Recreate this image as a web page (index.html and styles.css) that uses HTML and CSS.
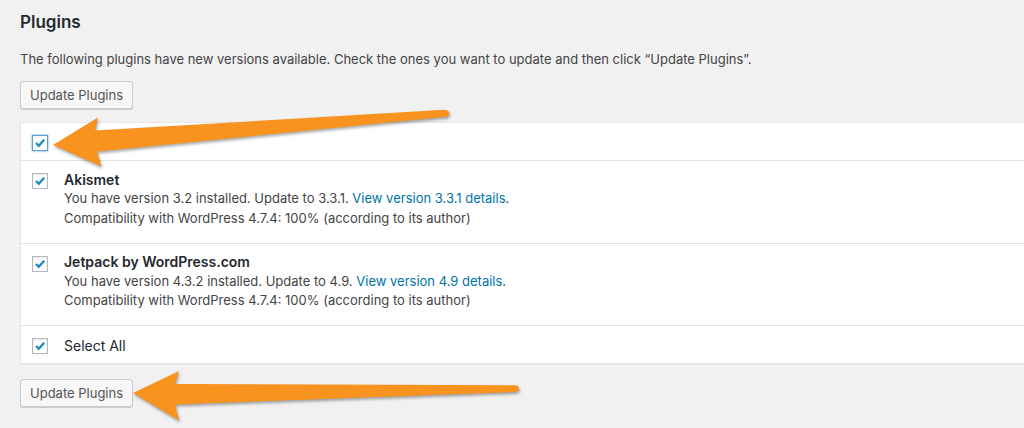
FILE: index.html
```html
<!DOCTYPE html>
<html lang="en">
<head>
<meta charset="utf-8">
<title>Plugins</title>
<link rel="stylesheet" href="styles.css">
</head>
<body>
<div class="wrap">
  <h2 class="title">Plugins</h2>
  <p class="intro">The following plugins have new versions available. Check the ones you want to update and then click “Update Plugins”.</p>
  <div class="actions"><button class="button" type="button">Update Plugins</button></div>

  <div class="plugins-table">
    <div class="row head">
      <span class="check-col"><span class="cb focus"><svg viewBox="0 0 16 16"><path d="M3.4 8 L6.6 11.1 L12.8 4.2"/></svg></span></span>
    </div>
    <div class="row plugin">
      <span class="check-col"><span class="cb"><svg viewBox="0 0 16 16"><path d="M3.4 8 L6.6 11.1 L12.8 4.2"/></svg></span></span>
      <div class="plugin-title">
        <strong>Akismet</strong>
        <span class="line">You have version 3.2 installed. Update to 3.3.1. <a href="#">View version 3.3.1 details</a>.</span>
        <span class="line">Compatibility with WordPress 4.7.4: 100% (according to its author)</span>
      </div>
    </div>
    <div class="row plugin">
      <span class="check-col"><span class="cb"><svg viewBox="0 0 16 16"><path d="M3.4 8 L6.6 11.1 L12.8 4.2"/></svg></span></span>
      <div class="plugin-title">
        <strong>Jetpack by WordPress.com</strong>
        <span class="line">You have version 4.3.2 installed. Update to 4.9. <a href="#">View version 4.9 details</a>.</span>
        <span class="line">Compatibility with WordPress 4.7.4: 100% (according to its author)</span>
      </div>
    </div>
    <div class="row foot">
      <span class="check-col"><span class="cb"><svg viewBox="0 0 16 16"><path d="M3.4 8 L6.6 11.1 L12.8 4.2"/></svg></span></span>
      <label class="select-all">Select All</label>
    </div>
  </div>

  <div class="actions bottom"><button class="button" type="button">Update Plugins</button></div>
</div>

<svg class="arrows" viewBox="0 0 1024 428" aria-hidden="true">
  <path class="arrow" d="M53 145 L98 117.5 L95 130.5 L445 109.8 Q449.5 110.5 449.2 113.4 Q448.8 116.4 445.5 116.8 L97 151.5 L101.5 166.5 Z"/>
  <path class="arrow" d="M133 393 L179 371 L175 384 L515 385.2 Q519 385.6 519 388.6 Q519 391.6 515 392 L175 404.5 L179 420.5 Z"/>
</svg>
</body>
</html>
```

FILE: styles.css
```css
* { box-sizing: border-box; }

html, body {
  margin: 0;
  padding: 0;
}

body {
  position: relative;
  width: 1024px;
  height: 428px;
  overflow: hidden;
  background: #f1f1f1;
  color: #444;
  font-family: Inter, Roboto, "Liberation Sans", Arial, sans-serif;
  font-size: 13px;
  line-height: 1.5;
}

.wrap {
  padding: 11px 0 0 20px;
}

.title {
  margin: 0;
  font-size: 17px;
  line-height: 22px;
  font-weight: 600;
  color: #23282d;
}

.intro {
  margin: 16px 0 12px;
  line-height: 20px;
}

.actions {
  display: flex;
}

.actions.bottom {
  margin-top: 15px;
}

.button {
  height: 28px;
  margin: 0;
  padding: 0 9px 1px;
  font-family: inherit;
  font-size: 13px;
  line-height: 26px;
  color: #555;
  background: #f7f7f7;
  border: 1px solid #ccc;
  border-radius: 3px;
  box-shadow: 0 1px 0 #ccc;
  cursor: pointer;
}

.plugins-table {
  margin-top: 13px;
  background: #fff;
  border: 1px solid #e5e5e5;
  border-right: 0;
  box-shadow: 0 1px 1px rgba(0, 0, 0, .04);
}

.row {
  display: flex;
  align-items: flex-start;
  border-bottom: 1px solid #e1e1e1;
}

.row:last-child {
  border-bottom: 0;
}

.row.head {
  height: 38px;
}

.row.plugin {
  height: 82.5px;
}

.row.foot {
  height: 37px;
}

.check-col {
  flex: 0 0 43px;
  padding: 12px 0 0 11px;
}

.cb {
  display: block;
  width: 16px;
  height: 16px;
  background: #fff;
  border: 1px solid #b4b9be;
  box-shadow: inset 0 1px 2px rgba(0, 0, 0, .1);
}

.cb.focus {
  border-color: #5b9dd9;
  box-shadow: 0 0 2px rgba(30, 140, 190, .8);
}

.cb svg {
  display: block;
  width: 14px;
  height: 14px;
}

.cb path {
  fill: none;
  stroke: #1e8cbe;
  stroke-width: 2.7;
  stroke-linecap: butt;
  stroke-linejoin: miter;
}

.plugin-title {
  display: flex;
  flex-direction: column;
  padding-top: 8.5px;
  line-height: 19.5px;
}

.plugin-title strong {
  font-size: 14px;
  font-weight: 600;
  color: #23282d;
}

.plugin-title a {
  color: #0073aa;
  text-decoration: none;
}

.select-all {
  padding-top: 9.5px;
  font-size: 14px;
  line-height: 20px;
  color: #23282d;
}

.arrows {
  position: absolute;
  left: 0;
  top: 0;
  width: 1024px;
  height: 428px;
  pointer-events: none;
}

.arrow {
  fill: #f7931e;
  filter: drop-shadow(1px 2px 1.5px rgba(0, 0, 0, .35));
}
```
